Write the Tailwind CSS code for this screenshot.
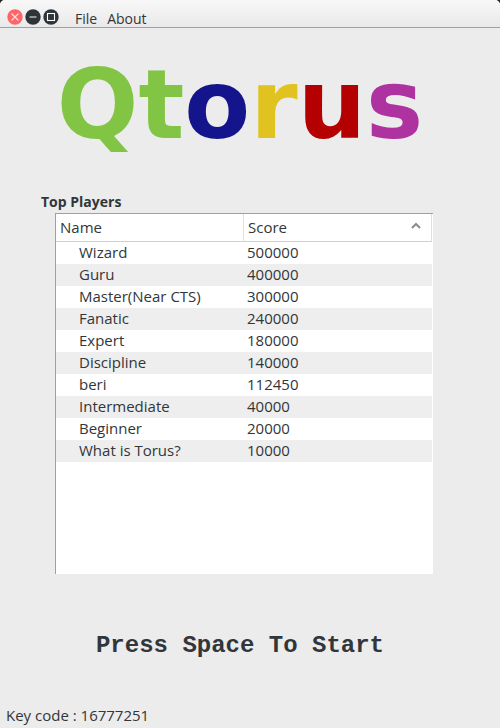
<!DOCTYPE html>
<html lang="en">
<head>
<meta charset="utf-8">
<meta name="viewport" content="width=device-width, initial-scale=1">
<title>Qtorus</title>
<script src="https://cdn.jsdelivr.net/npm/@tailwindcss/browser@4"></script>
</head>
<body class="bg-[#222222]">
<div class="flex min-h-screen flex-col overflow-hidden rounded-t-[5px] bg-[#ececec] font-['Open_Sans','Noto_Sans',sans-serif] text-[15px] leading-[22px] text-[#31363b]">
  <header class="flex h-7 items-center border-b border-[#a0a0a0] bg-linear-to-b from-[#f8f8f8] to-[#e9e9e9] pt-1.5 pl-[7px]">
    <div class="flex gap-0.5">
      <button type="button" aria-label="Close" class="size-4">
        <svg viewBox="0 0 16 16" class="size-4"><circle cx="8" cy="8" r="7.7" fill="#ff6468"/><path d="M4.5 4.5l7 7M11.5 4.5l-7 7" stroke="#ffdedf" stroke-width="1.1" fill="none"/></svg>
      </button>
      <button type="button" aria-label="Minimize" class="size-4">
        <svg viewBox="0 0 16 16" class="size-4"><circle cx="8" cy="8" r="7.7" fill="#2e3538"/><path d="M4.5 8h7" stroke="#b4b7b8" stroke-width="1.5"/></svg>
      </button>
      <button type="button" aria-label="Maximize" class="size-4">
        <svg viewBox="0 0 16 16" class="size-4"><circle cx="8" cy="8" r="7.7" fill="#2e3538"/><rect x="4.5" y="4.5" width="7" height="7" stroke="#ffffff" stroke-width="1.1" fill="none"/></svg>
      </button>
    </div>
    <nav class="flex gap-2.5 pt-1 pl-4 text-sm">
      <button type="button">File</button>
      <button type="button">About</button>
    </nav>
  </header>
  <main class="flex flex-1 flex-col">
    <h1 class="pt-[21px] pr-5 text-center font-['DejaVu_Sans',sans-serif] text-[96px] leading-[112px] font-bold"><span class="text-[#82c444]">Qt</span><span class="text-[#14148c]">o</span><span class="text-[#e0c320]">r</span><span class="text-[#b40000]">u</span><span class="text-[#ae32a0]">s</span></h1>
    <h2 id="players" class="mt-[30px] pl-[41px] text-sm leading-[22px] font-bold">Top Players</h2>
    <div class="mr-[67px] ml-[55px] flex-1 border-t border-l border-[#a0a0a0] bg-white pr-px">
      <table aria-labelledby="players" class="w-full table-fixed border-separate border-spacing-0 text-left">
        <thead>
          <tr class="h-7 bg-[linear-gradient(to_bottom,transparent,#d0d0d0)] bg-clip-border">
            <th class="w-1/2 border-r border-b border-r-[#e0e0e0] border-b-[#d0d0d0] bg-white bg-clip-padding pb-0.5 pl-1 font-normal">Name</th>
            <th class="border-r border-b border-r-[#e0e0e0] border-b-[#d0d0d0] bg-white bg-clip-padding pr-2.5 pb-0.5 pl-1 font-normal">
              <button type="button" class="flex w-full items-center justify-between">Score
                <svg viewBox="0 0 10 8" class="mb-0.5 h-2 w-2.5"><path d="M1 6l4-4 4 4" fill="none" stroke="#8c8c8c" stroke-width="2"/></svg>
              </button>
            </th>
          </tr>
        </thead>
        <tbody class="leading-5 [&_td]:p-0 [&_td]:pb-0.5 [&_td:first-child]:pl-[23px] [&_td:last-child]:pl-[3px] [&_tr:nth-child(even)]:bg-[#eeeeee]">
          <tr><td>Wizard</td><td>500000</td></tr>
          <tr><td>Guru</td><td>400000</td></tr>
          <tr><td>Master(Near CTS)</td><td>300000</td></tr>
          <tr><td>Fanatic</td><td>240000</td></tr>
          <tr><td>Expert</td><td>180000</td></tr>
          <tr><td>Discipline</td><td>140000</td></tr>
          <tr><td>beri</td><td>112450</td></tr>
          <tr><td>Intermediate</td><td>40000</td></tr>
          <tr><td>Beginner</td><td>20000</td></tr>
          <tr><td>What is Torus?</td><td>10000</td></tr>
        </tbody>
      </table>
    </div>
    <p class="pt-14 pr-5 pb-[42px] text-center font-['Courier_10_Pitch','Liberation_Mono',monospace] text-2xl leading-8 font-bold">Press Space To Start</p>
  </main>
  <footer class="px-1.5 pb-0.5">Key code : 16777251</footer>
</div>
</body>
</html>
